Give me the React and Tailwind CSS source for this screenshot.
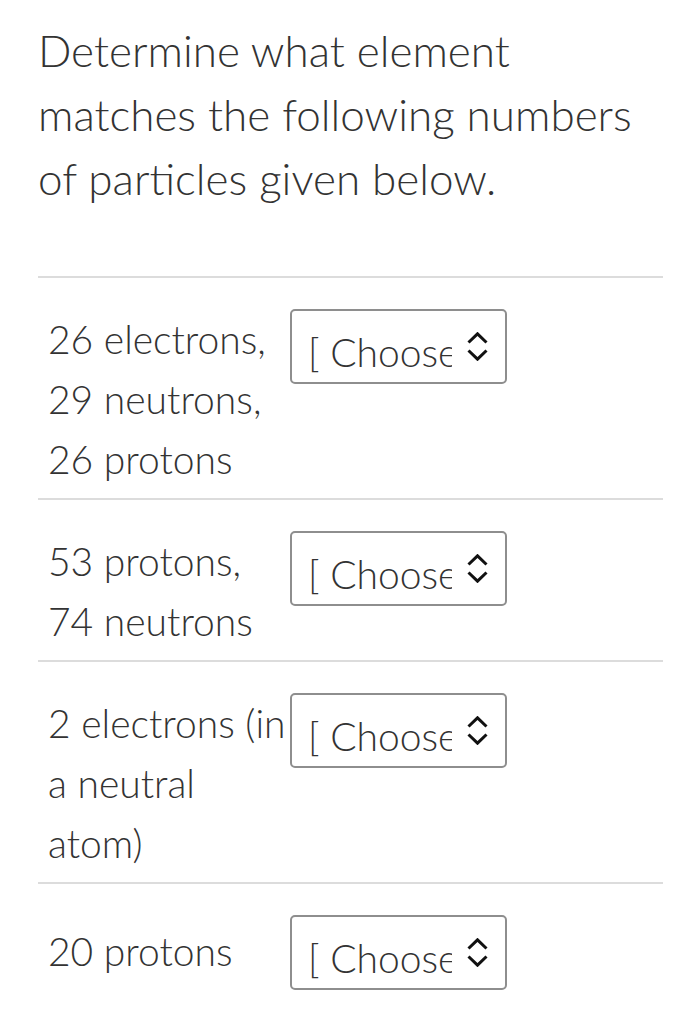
import React from 'react';

const rows = [
    { lines: ['26 electrons,', '29 neutrons,', '26 protons'] },
    { lines: ['53 protons,', '74 neutrons'] },
    { lines: ['2 electrons (in', 'a neutral', 'atom)'] },
    { lines: ['20 protons'], offset: true },
];

const UpDown = () => (
    <svg width="21" height="29" viewBox="0 0 21 29" fill="none" stroke="#111" strokeWidth="3" strokeLinejoin="miter">
        <path d="M1.5 10.5 L10.5 1.8 L19.5 10.5" />
        <path d="M1.5 18.5 L10.5 27.2 L19.5 18.5" />
    </svg>
);

const ChooseSelect = () => (
    <div className="w-[217px] h-[75px] shrink-0 border-2 border-[#8e8e8e] rounded-[5px] bg-white flex items-center pl-[16px]">
        <span className="w-[144px] overflow-hidden whitespace-nowrap pt-[10px] leading-[48px] text-[39px] font-light text-[#333]">
            [ Choose ]
        </span>
        <span className="ml-[15px] flex">
            <UpDown />
        </span>
    </div>
);

export default function App() {
    return (
        <div className="min-h-screen bg-white pt-[18px] pl-[38px] pr-[15px] text-[#333] font-light" style={{ fontFamily: 'Lato, "Open Sans", sans-serif' }}>
            <p className="text-[44px] leading-[64px] whitespace-nowrap">
                Determine what element<br />
                matches the following numbers<br />
                of particles given below.
            </p>

            <div className="mt-[66px]">
                {rows.map((row, i) => (
                    <div key={i} className="border-t-2 border-[#dcdcdc] pt-[31px] pb-[9px] px-[10px] flex items-start">
                        <div className={`w-[242px] shrink-0 text-[39px] leading-[60px] ${row.offset ? 'mt-[6px]' : ''}`}>
                            {row.lines.map((l, j) => (
                                <div key={j} className="whitespace-nowrap">{l}</div>
                            ))}
                        </div>
                        <ChooseSelect />
                    </div>
                ))}
            </div>
        </div>
    );
}
